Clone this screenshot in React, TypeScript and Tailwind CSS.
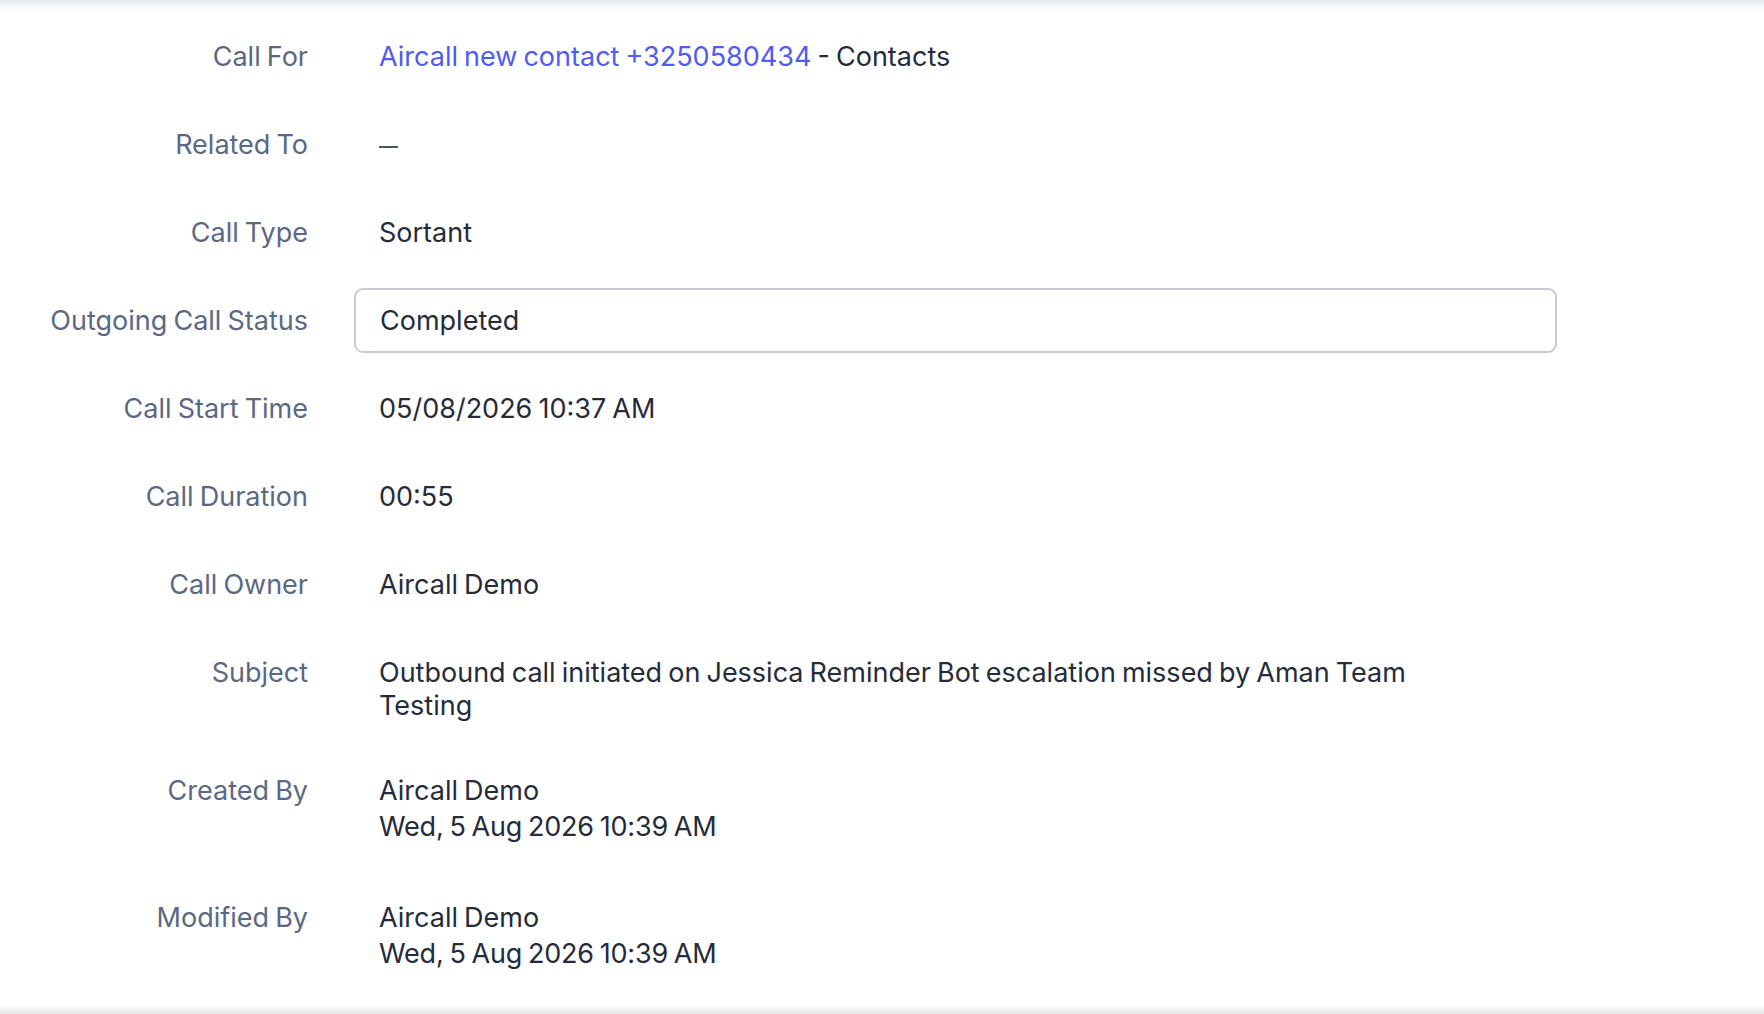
import React from "react";

type Field = {
  label: string;
  value: React.ReactNode;
  boxed?: boolean;
  spacing?: string;
};

const fields: Field[] = [
  {
    label: "Call For",
    value: (
      <>
        <span className="text-[#4f5cf0]">Aircall new contact +3250580434</span>
        <span> - Contacts</span>
      </>
    ),
  },
  {
    label: "Related To",
    value: <span className="inline-block h-[2px] w-[19px] bg-[#4a5264] align-middle" />,
  },
  { label: "Call Type", value: "Sortant" },
  { label: "Outgoing Call Status", value: "Completed", boxed: true },
  { label: "Call Start Time", value: "05/08/2026 10:37 AM" },
  { label: "Call Duration", value: "00:55" },
  { label: "Call Owner", value: "Aircall Demo" },
  {
    label: "Subject",
    spacing: "-mb-[3px]",
    value: (
      <span className="block max-w-[1090px]">
        Outbound call initiated on Jessica Reminder Bot escalation missed by Aman Team Testing
      </span>
    ),
  },
  {
    label: "Created By",
    spacing: "mb-[3px]",
    value: (
      <>
        <div>Aircall Demo</div>
        <div className="mt-[3px] tracking-[-0.2px]">Wed, 5 Aug 2026 10:39 AM</div>
      </>
    ),
  },
  {
    label: "Modified By",
    value: (
      <>
        <div>Aircall Demo</div>
        <div className="mt-[3px] tracking-[-0.2px]">Wed, 5 Aug 2026 10:39 AM</div>
      </>
    ),
  },
];

const DetailRow = ({ label, value, boxed, spacing }: Field) => {
  return (
    <div className={`flex items-start ${spacing ?? ""}`}>
      <div className="w-[308px] shrink-0 py-4 text-right text-[#5b6883] leading-[33px]">
        {label}
      </div>
      <div
        className={
          boxed
            ? "ml-[46px] w-[1203px] rounded-[9px] border-2 border-[#c9c9d6] px-6 py-[14px] leading-[33px]"
            : "ml-[46px] w-[1203px] px-[25px] py-4 leading-[33px]"
        }
      >
        {value}
      </div>
    </div>
  );
};

export default function App() {
  return (
    <div
      className="relative flex h-[1014px] w-full flex-col overflow-hidden bg-white text-[27px] text-[#252b3b] [word-spacing:-1.5px]"
      style={{ fontFamily: "Inter, 'Noto Sans', sans-serif" }}
    >
      <div className="h-[10px] shrink-0 bg-gradient-to-b from-[#e3e5ea] via-[#f3f4f6] to-white" />
      <div className="flex flex-1 flex-col gap-[23px] pt-[14px]">
        {fields.map((f) => (
          <DetailRow key={f.label} {...f} />
        ))}
      </div>
      <div className="h-[9px] shrink-0 bg-gradient-to-b from-white via-[#f2f2f4] to-[#e8e8ec]" />
    </div>
  );
}
